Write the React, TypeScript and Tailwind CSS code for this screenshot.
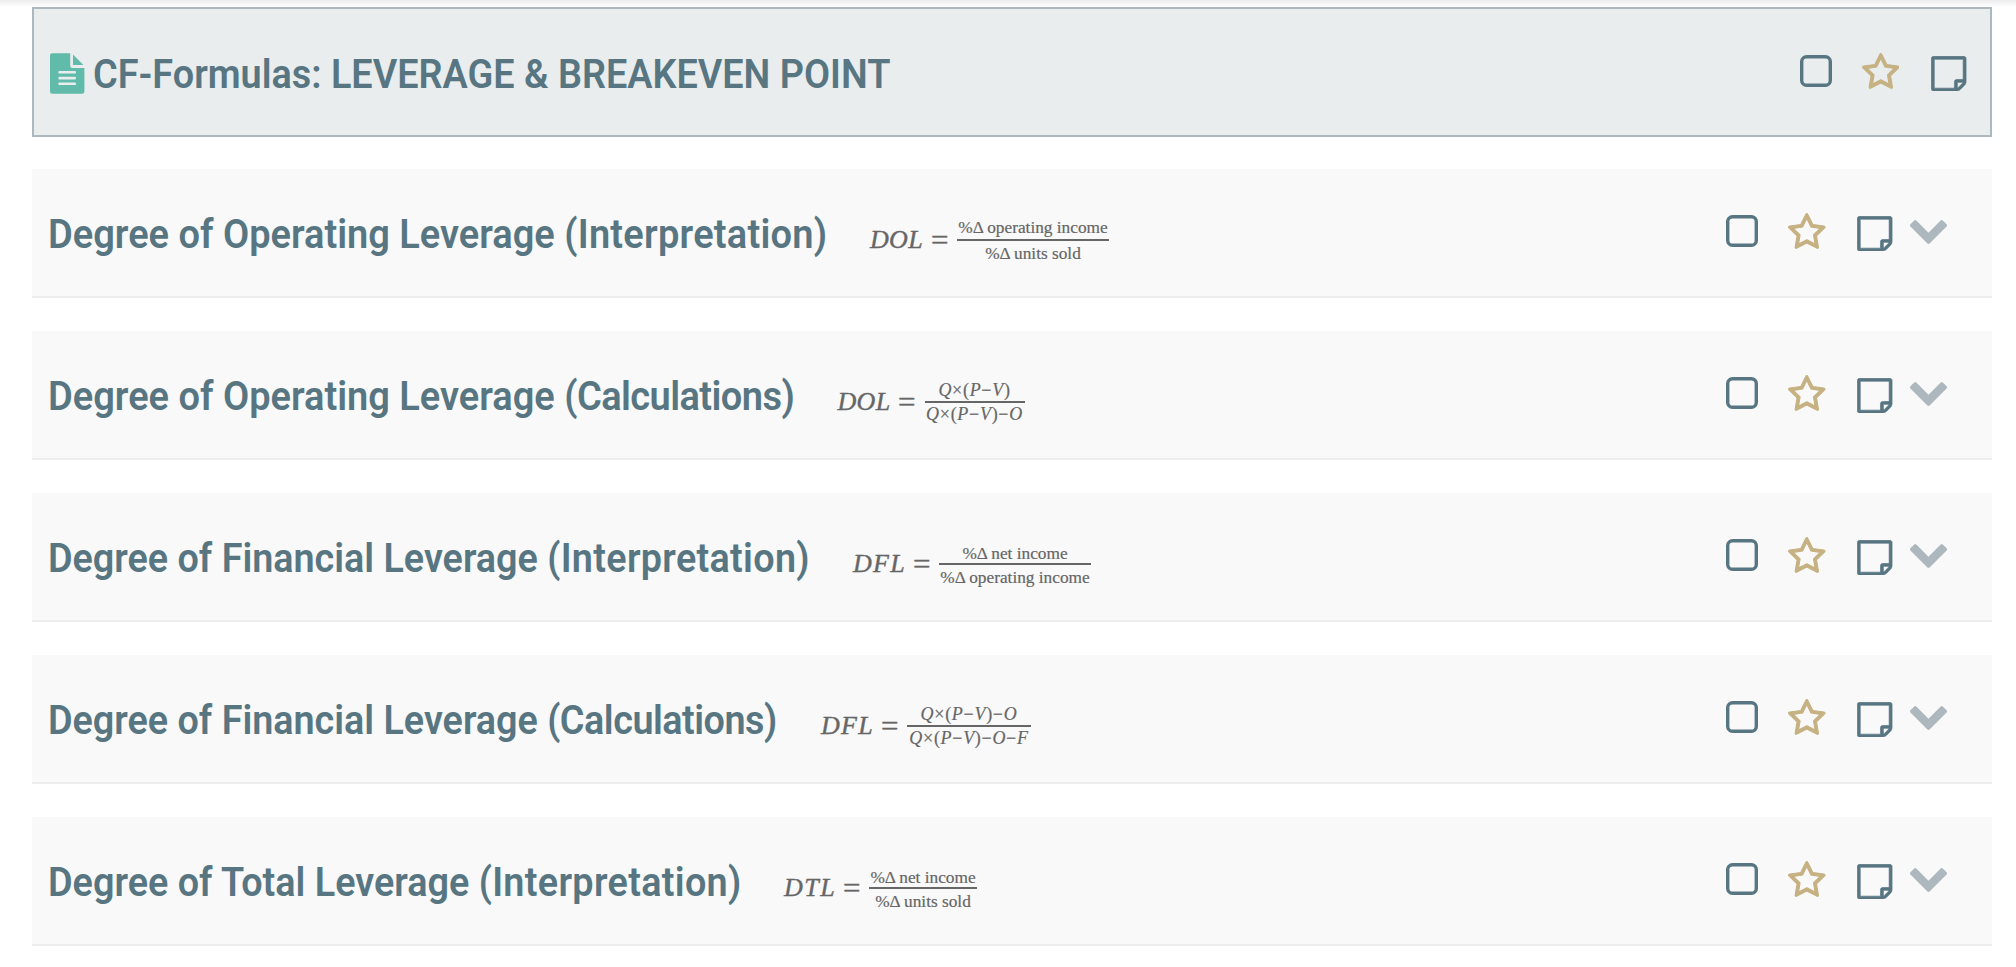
import { Fragment, type ReactNode } from 'react'

function FileIcon() {
  return (
    <svg viewBox="0 0 34.5 41" className="mt-[44px] h-[41px] w-[34.5px] shrink-0 fill-[#61bbaa]">
      <path
        fillRule="evenodd"
        d="M2.2 0.3H20.2V12.7Q20.2 14.9 22.4 14.9H34.4V38.5Q34.4 40.7 32.2 40.7H2.2Q0 40.7 0 38.5V2.5Q0 0.3 2.2 0.3ZM9.3 18Q8.4 18 8.4 18.9V19.7Q8.4 20.6 9.3 20.6H25Q25.9 20.6 25.9 19.7V18.9Q25.9 18 25 18ZM9.3 23.8Q8.4 23.8 8.4 24.7V25.5Q8.4 26.4 9.3 26.4H25Q25.9 26.4 25.9 25.5V24.7Q25.9 23.8 25 23.8ZM9.3 29.5Q8.4 29.5 8.4 30.4V31.2Q8.4 32.1 9.3 32.1H25Q25.9 32.1 25.9 31.2V30.4Q25.9 29.5 25 29.5Z"
      />
      <path d="M23 1.6L33.4 12H23Z" />
    </svg>
  )
}

function BoxIcon() {
  return (
    <svg viewBox="0 0 32 32" className="h-[32px] w-[32px] fill-none stroke-[#587682]">
      <rect x="1.7" y="1.7" width="28.6" height="28.6" rx="4.8" strokeWidth="3.4" />
    </svg>
  )
}

function StarIcon() {
  return (
    <svg viewBox="-25 10 1714 1635" className="ml-[30px] mt-[-2px] h-[36px] w-[37.6px] fill-[#c6b182]">
      <path
        stroke="#c6b182"
        strokeWidth="50"
        strokeLinejoin="round"
        d="M1137 1004l306-297-422-62-189-382-189 382-422 62 306 297-73 421 378-199 377 199zm527-357q0 22-26 48l-363 354 86 500q1 7 1 20 0 50-41 50-19 0-40-12l-449-236-449 236q-22 12-40 12-21 0-31.5-14.5t-10.5-35.5q0-6 2-20l86-500-364-354q-25-27-25-48 0-37 56-46l502-73 225-455q19-41 49-41t49 41l225 455 502 73q56 9 56 46z"
      />
    </svg>
  )
}

function NoteIcon() {
  return (
    <svg viewBox="-15 89 1566 1566" className="ml-[31.7px] mt-px h-[35.4px] w-[35.4px] fill-[#587682]">
      <path
        stroke="#587682"
        strokeWidth="30"
        d="M1400 1256h-248v248q29-10 41-22l185-185q12-12 22-41zm-280-128h288v-896h-1280v1280h896v-288q0-40 28-68t68-28zm416-928v1024q0 40-20 88t-48 76l-184 184q-28 28-76 48t-88 20h-1024q-40 0-68-28t-28-68v-1344q0-40 28-68t68-28h1344q40 0 68 28t28 68z"
      />
    </svg>
  )
}

function ChevronIcon() {
  return (
    <svg viewBox="90 533 1612 1035" className="ml-[17.2px] mt-[5px] h-[24px] w-[37px] fill-[#acb7be]">
      <path d="M1683 808l-742 741q-19 19-45 19t-45-19l-742-741q-19-19-19-45.5t19-45.5l166-165q19-19 45-19t45 19l531 531 531-531q19-19 45-19t45 19l166 165q19 19 19 45.5t-19 45.5z" />
    </svg>
  )
}

function Actions({ expandable = false }: { expandable?: boolean }) {
  return (
    <div className="ml-auto flex items-start">
      <BoxIcon />
      <StarIcon />
      <NoteIcon />
      {expandable && <ChevronIcon />}
    </div>
  )
}

function Expr({ text }: { text: string }) {
  return (
    <span className="text-[18px] italic tracking-[0.7px]">
      {text.split(/([×()−])/).map((part, i) => (
        <Fragment key={i}>{/[×()−]/.test(part) ? <span className="not-italic">{part}</span> : part}</Fragment>
      ))}
    </span>
  )
}

type Row = {
  name: string
  kind: string
  widthClass: string
  scaleClass: string
  kindClass: string
  symbol: string
  symbolClass: string
  fractionClass: string
  topClass: string
  bottomClass: string
  top: ReactNode
  bottom: ReactNode
}

const rows: Row[] = [
  {
    name: 'Degree of Operating Leverage',
    kind: '(Interpretation)',
    widthClass: 'w-[822px]',
    scaleClass: 'scale-x-[0.95]',
    kindClass: 'tracking-[0.25px]',
    symbol: 'DOL',
    symbolClass: 'w-[54px] tracking-[0.3px]',
    fractionClass: 'w-[152px]',
    topClass: 'pt-0',
    bottomClass: 'pt-[3px]',
    top: '%Δ operating income',
    bottom: '%Δ units sold',
  },
  {
    name: 'Degree of Operating Leverage',
    kind: '(Calculations)',
    widthClass: 'w-[789.5px]',
    scaleClass: 'scale-x-[0.95]',
    kindClass: 'tracking-[-0.6px]',
    symbol: 'DOL',
    symbolClass: 'w-[54px] tracking-[0.3px]',
    fractionClass: 'w-[100px]',
    topClass: 'pt-0',
    bottomClass: 'pt-px',
    top: <Expr text="Q×(P−V)" />,
    bottom: <Expr text="Q×(P−V)−O" />,
  },
  {
    name: 'Degree of Financial Leverage',
    kind: '(Interpretation)',
    widthClass: 'w-[805px]',
    scaleClass: 'scale-x-[0.943]',
    kindClass: 'tracking-[0.35px]',
    symbol: 'DFL',
    symbolClass: 'w-[53px] tracking-[1.3px]',
    fractionClass: 'w-[152px]',
    topClass: 'pt-[2px]',
    bottomClass: 'pt-[3px]',
    top: '%Δ net income',
    bottom: '%Δ operating income',
  },
  {
    name: 'Degree of Financial Leverage',
    kind: '(Calculations)',
    widthClass: 'w-[773px]',
    scaleClass: 'scale-x-[0.943]',
    kindClass: 'tracking-[-0.5px]',
    symbol: 'DFL',
    symbolClass: 'w-[53px] tracking-[1.3px]',
    fractionClass: 'w-[124px]',
    topClass: 'pt-0',
    bottomClass: 'pt-px',
    top: <Expr text="Q×(P−V)−O" />,
    bottom: <Expr text="Q×(P−V)−O−F" />,
  },
  {
    name: 'Degree of Total Leverage',
    kind: '(Interpretation)',
    widthClass: 'w-[736px]',
    scaleClass: 'scale-x-[0.944]',
    kindClass: 'tracking-[0.35px]',
    symbol: 'DTL',
    symbolClass: 'w-[52px] tracking-[1.5px]',
    fractionClass: 'w-[108px]',
    topClass: 'pt-[2px]',
    bottomClass: 'pt-[3px]',
    top: '%Δ net income',
    bottom: '%Δ units sold',
  },
]

function FormulaRow({ row }: { row: Row }) {
  return (
    <section className="flex h-[129px] border-b-2 border-[#ededed] bg-[#f9f9f9] pl-[16px] pr-[45px]">
      <h2
        className={`shrink-0 whitespace-nowrap pt-[42px] font-['Roboto',sans-serif] text-[40px] font-semibold leading-[47px] text-[#587682] ${row.widthClass}`}
      >
        <span className={`inline-block origin-left ${row.scaleClass}`}>
          {row.name} <span className={row.kindClass}>{row.kind}</span>
        </span>
      </h2>
      <div className="flex whitespace-nowrap font-['Liberation_Serif',serif] text-[#666]">
        <div className={`shrink-0 pt-[56px] text-[26px] italic leading-[30px] [-webkit-text-stroke:0.4px_#666] ${row.symbolClass}`}>
          {row.symbol}
        </div>
        <div className="w-[33px] shrink-0 pl-[6.5px] pt-[56px] text-[27px] leading-[30px] [-webkit-text-stroke:0.4px_#666]">
          <span className="inline-block origin-left scale-x-[1.15]">=</span>
        </div>
        <div className={`pt-[49px] text-[17.3px] leading-[20px] [-webkit-text-stroke:0.2px_#666] ${row.fractionClass}`}>
          <div className={`flex h-[21px] justify-center ${row.topClass}`}>
            <span>{row.top}</span>
          </div>
          <div className="h-[2px] bg-[#666]" />
          <div className={`flex justify-center ${row.bottomClass}`}>
            <span>{row.bottom}</span>
          </div>
        </div>
      </div>
      <div className="ml-auto pt-[46px]">
        <Actions expandable />
      </div>
    </section>
  )
}

export default function App() {
  return (
    <main className="h-[967px] overflow-hidden bg-white">
      <div className="h-[7px] bg-linear-to-b from-[#ececec] to-white" />
      <div className="pl-[32px] pr-[24px]">
        <header className="flex h-[130px] border-2 border-[#acb7be] bg-[#e9edee] pl-[16px] pr-[23.5px]">
          <FileIcon />
          <h1 className="ml-[8.5px] w-[800px] whitespace-nowrap pt-[42px] font-['Roboto',sans-serif] text-[40px] font-semibold leading-[47px] text-[#587682]">
            <span className="inline-block origin-left scale-x-[0.945]">CF-Formulas: LEVERAGE &amp; BREAKEVEN POINT</span>
          </h1>
          <div className="ml-auto pt-[46px]">
            <Actions />
          </div>
        </header>
        <div className="mt-[32px] flex flex-col gap-[33px]">
          {rows.map((row) => (
            <FormulaRow key={row.name + row.kind} row={row} />
          ))}
        </div>
      </div>
    </main>
  )
}
